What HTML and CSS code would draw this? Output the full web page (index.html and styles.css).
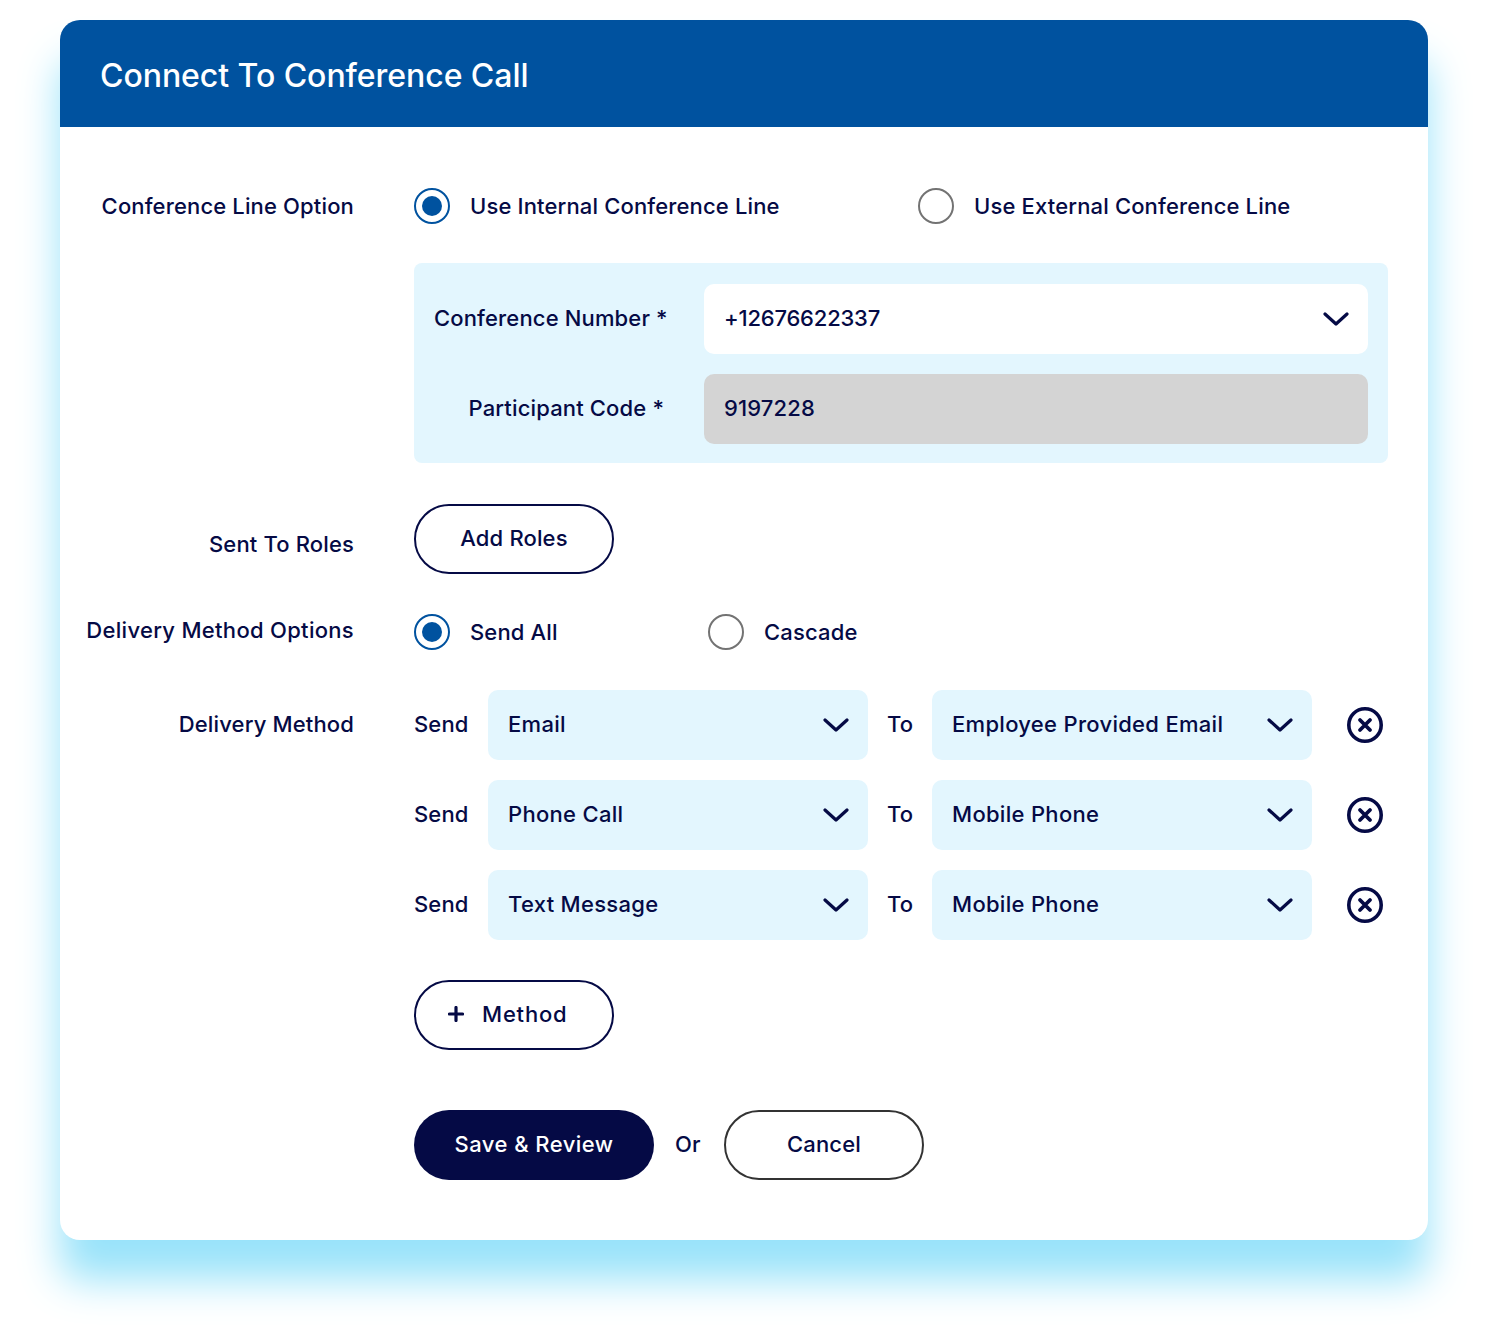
FILE: index.html
```html
<!DOCTYPE html>
<html lang="en">
<head>
<meta charset="utf-8">
<title>Connect To Conference Call</title>
<link rel="stylesheet" href="styles.css">
</head>
<body>
<svg class="defs" width="0" height="0" aria-hidden="true">
  <symbol id="chev" viewBox="0 0 26 14"><path d="M2 2l11 10L24 2" fill="none" stroke="currentColor" stroke-width="3.2" stroke-linecap="round" stroke-linejoin="round"/></symbol>
  <symbol id="close" viewBox="0 0 36 36"><circle cx="18" cy="18" r="16.2" fill="none" stroke="currentColor" stroke-width="3.6"/><path d="M13 13l10 10M23 13L13 23" fill="none" stroke="currentColor" stroke-width="3.8" stroke-linecap="round"/></symbol>
</svg>
<main class="card">
  <header class="card-head"><h1 class="title">Connect To Conference Call</h1></header>
  <div class="card-body">
    <div class="row row-line">
      <div class="label">Conference Line Option</div>
      <div class="options">
        <label class="opt opt-wide"><span class="radio on"></span>Use Internal Conference Line</label>
        <label class="opt"><span class="radio"></span>Use External Conference Line</label>
      </div>
    </div>
    <div class="row row-panel">
      <div class="label"></div>
      <div class="panel">
        <div class="panel-row">
          <div class="panel-label txt">Conference Number *</div>
          <div class="field field-white"><span class="txt num">+12676622337</span><svg class="chev"><use href="#chev"/></svg></div>
        </div>
        <div class="panel-row">
          <div class="panel-label txt">Participant Code *</div>
          <div class="field field-gray"><span class="txt">9197228</span></div>
        </div>
      </div>
    </div>
    <div class="row row-roles">
      <div class="label label-low">Sent To Roles</div>
      <button class="btn btn-outline">Add Roles</button>
    </div>
    <div class="row row-opts">
      <div class="label label-up">Delivery Method Options</div>
      <div class="options">
        <label class="opt opt-mid"><span class="radio on"></span>Send All</label>
        <label class="opt"><span class="radio"></span>Cascade</label>
      </div>
    </div>
    <div class="row row-method">
      <div class="label label-method">Delivery Method</div>
      <div class="methods">
        <div class="method">
          <span class="word-send txt">Send</span>
          <div class="field field-blue"><span class="txt">Email</span><svg class="chev"><use href="#chev"/></svg></div>
          <span class="word-to txt">To</span>
          <div class="field field-blue"><span class="txt">Employee Provided Email</span><svg class="chev"><use href="#chev"/></svg></div>
          <svg class="close"><use href="#close"/></svg>
        </div>
        <div class="method">
          <span class="word-send txt">Send</span>
          <div class="field field-blue"><span class="txt">Phone Call</span><svg class="chev"><use href="#chev"/></svg></div>
          <span class="word-to txt">To</span>
          <div class="field field-blue"><span class="txt">Mobile Phone</span><svg class="chev"><use href="#chev"/></svg></div>
          <svg class="close"><use href="#close"/></svg>
        </div>
        <div class="method">
          <span class="word-send txt">Send</span>
          <div class="field field-blue"><span class="txt">Text Message</span><svg class="chev"><use href="#chev"/></svg></div>
          <span class="word-to txt">To</span>
          <div class="field field-blue"><span class="txt">Mobile Phone</span><svg class="chev"><use href="#chev"/></svg></div>
          <svg class="close"><use href="#close"/></svg>
        </div>
        <button class="btn btn-outline btn-add">
          <svg class="plus" viewBox="0 0 16 16"><path d="M8 1.5v13M1.5 8h13" fill="none" stroke="currentColor" stroke-width="3.2" stroke-linecap="round"/></svg>
          <span>Method</span>
        </button>
        <div class="actions">
          <button class="btn btn-primary">Save &amp; Review</button>
          <span class="word-or txt">Or</span>
          <button class="btn btn-outline btn-cancel">Cancel</button>
        </div>
      </div>
    </div>
  </div>
</main>
</body>
</html>
```
FILE: styles.css
```css
* { box-sizing: border-box; }
html, body { margin: 0; padding: 0; background: #fff; }
body {
  height: 1340px;
  padding: 20px 60px 0;
  overflow: hidden;
  font-family: "Inter", "Liberation Sans", sans-serif;
  font-weight: 500;
  font-size: 22px;
  line-height: 26px;
  letter-spacing: 0.15px;
  color: #050a45;
}
.defs { position: absolute; }
.card {
  width: 1368px;
  height: 1220px;
  border-radius: 20px;
  background: #fff;
  box-shadow: 0 40px 40px #99e3fa;
}
.card-head {
  height: 107px;
  padding: 5px 0 0 40px;
  display: flex;
  align-items: center;
  background: #00529f;
  border-radius: 20px 20px 0 0;
}
.title { margin: 0; font-size: 32px; line-height: 38px; font-weight: 500; color: #fff; letter-spacing: -0.05px; }
.card-body { padding: 61px 40px 0 0; }
.row { display: flex; }
.label { width: 294px; margin-right: 60px; flex: none; text-align: right; white-space: nowrap; }
.row-line { height: 36px; align-items: center; }
.row-panel { margin-top: 39px; }
.row-roles { margin-top: 41px; align-items: center; }
.row-opts { margin-top: 40px; height: 36px; align-items: center; }
.row-method { margin-top: 40px; }
.label-low { padding-top: 9px; }
.label-up { padding-bottom: 4px; letter-spacing: 0.3px; }
.label-method { line-height: 68px; }
.options { display: flex; align-items: center; }
.opt { display: flex; align-items: center; gap: 20px; white-space: nowrap; }
.opt-wide { width: 504px; }
.opt-mid { width: 294px; }
.radio {
  width: 36px; height: 36px; flex: none;
  display: flex; align-items: center; justify-content: center;
  border: 2px solid #737373;
  border-radius: 50%;
  background: #fff;
}
.radio.on { border-color: #00529f; }
.radio.on::after { content: ""; width: 20px; height: 20px; border-radius: 50%; background: #00529f; }
.panel {
  width: 974px;
  height: 200px;
  padding: 21px 20px 0;
  display: flex;
  flex-direction: column;
  gap: 20px;
  background: #e3f6fe;
  border-radius: 8px;
}
.panel-row { display: flex; align-items: center; }
.panel-label { width: 230px; margin-right: 40px; text-align: right; white-space: nowrap; }
.field {
  height: 70px;
  padding: 0 19px 0 20px;
  display: flex;
  align-items: center;
  justify-content: space-between;
  border-radius: 10px;
  white-space: nowrap;
}
.txt { margin-top: -2px; }
.num { letter-spacing: -0.2px; }
.field-white { width: 664px; background: #fff; }
.field-gray { width: 664px; background: #d4d4d4; }
.field-blue { width: 380px; background: #e3f6fe; letter-spacing: 0.3px; }
.chev { width: 26px; height: 14px; flex: none; }
.btn {
  height: 70px;
  padding: 0 0 2px;
  border-radius: 35px;
  font: inherit;
  letter-spacing: inherit;
  color: inherit;
  cursor: pointer;
}
.btn-outline { width: 200px; border: 2px solid #050a45; background: #fff; }
.btn-primary { width: 240px; border: 0; background: #050a45; color: #fff; letter-spacing: 0.45px; }
.btn-cancel { border-color: #333; }
.btn-add {
  margin-top: 20px;
  display: flex;
  align-items: center;
  justify-content: flex-start;
  gap: 18px;
  padding: 0 0 2px 32px;
  letter-spacing: 0.8px;
}
.plus { width: 16px; height: 16px; flex: none; }
.methods { display: flex; flex-direction: column; gap: 20px; align-items: flex-start; }
.method { display: flex; align-items: center; }
.word-send { width: 74px; }
.word-to { width: 64px; padding-left: 19px; }
.close { width: 36px; height: 36px; margin-left: 35px; flex: none; }
.actions { margin-top: 40px; display: flex; align-items: center; }
.word-or { width: 70px; padding-left: 21px; }
```
